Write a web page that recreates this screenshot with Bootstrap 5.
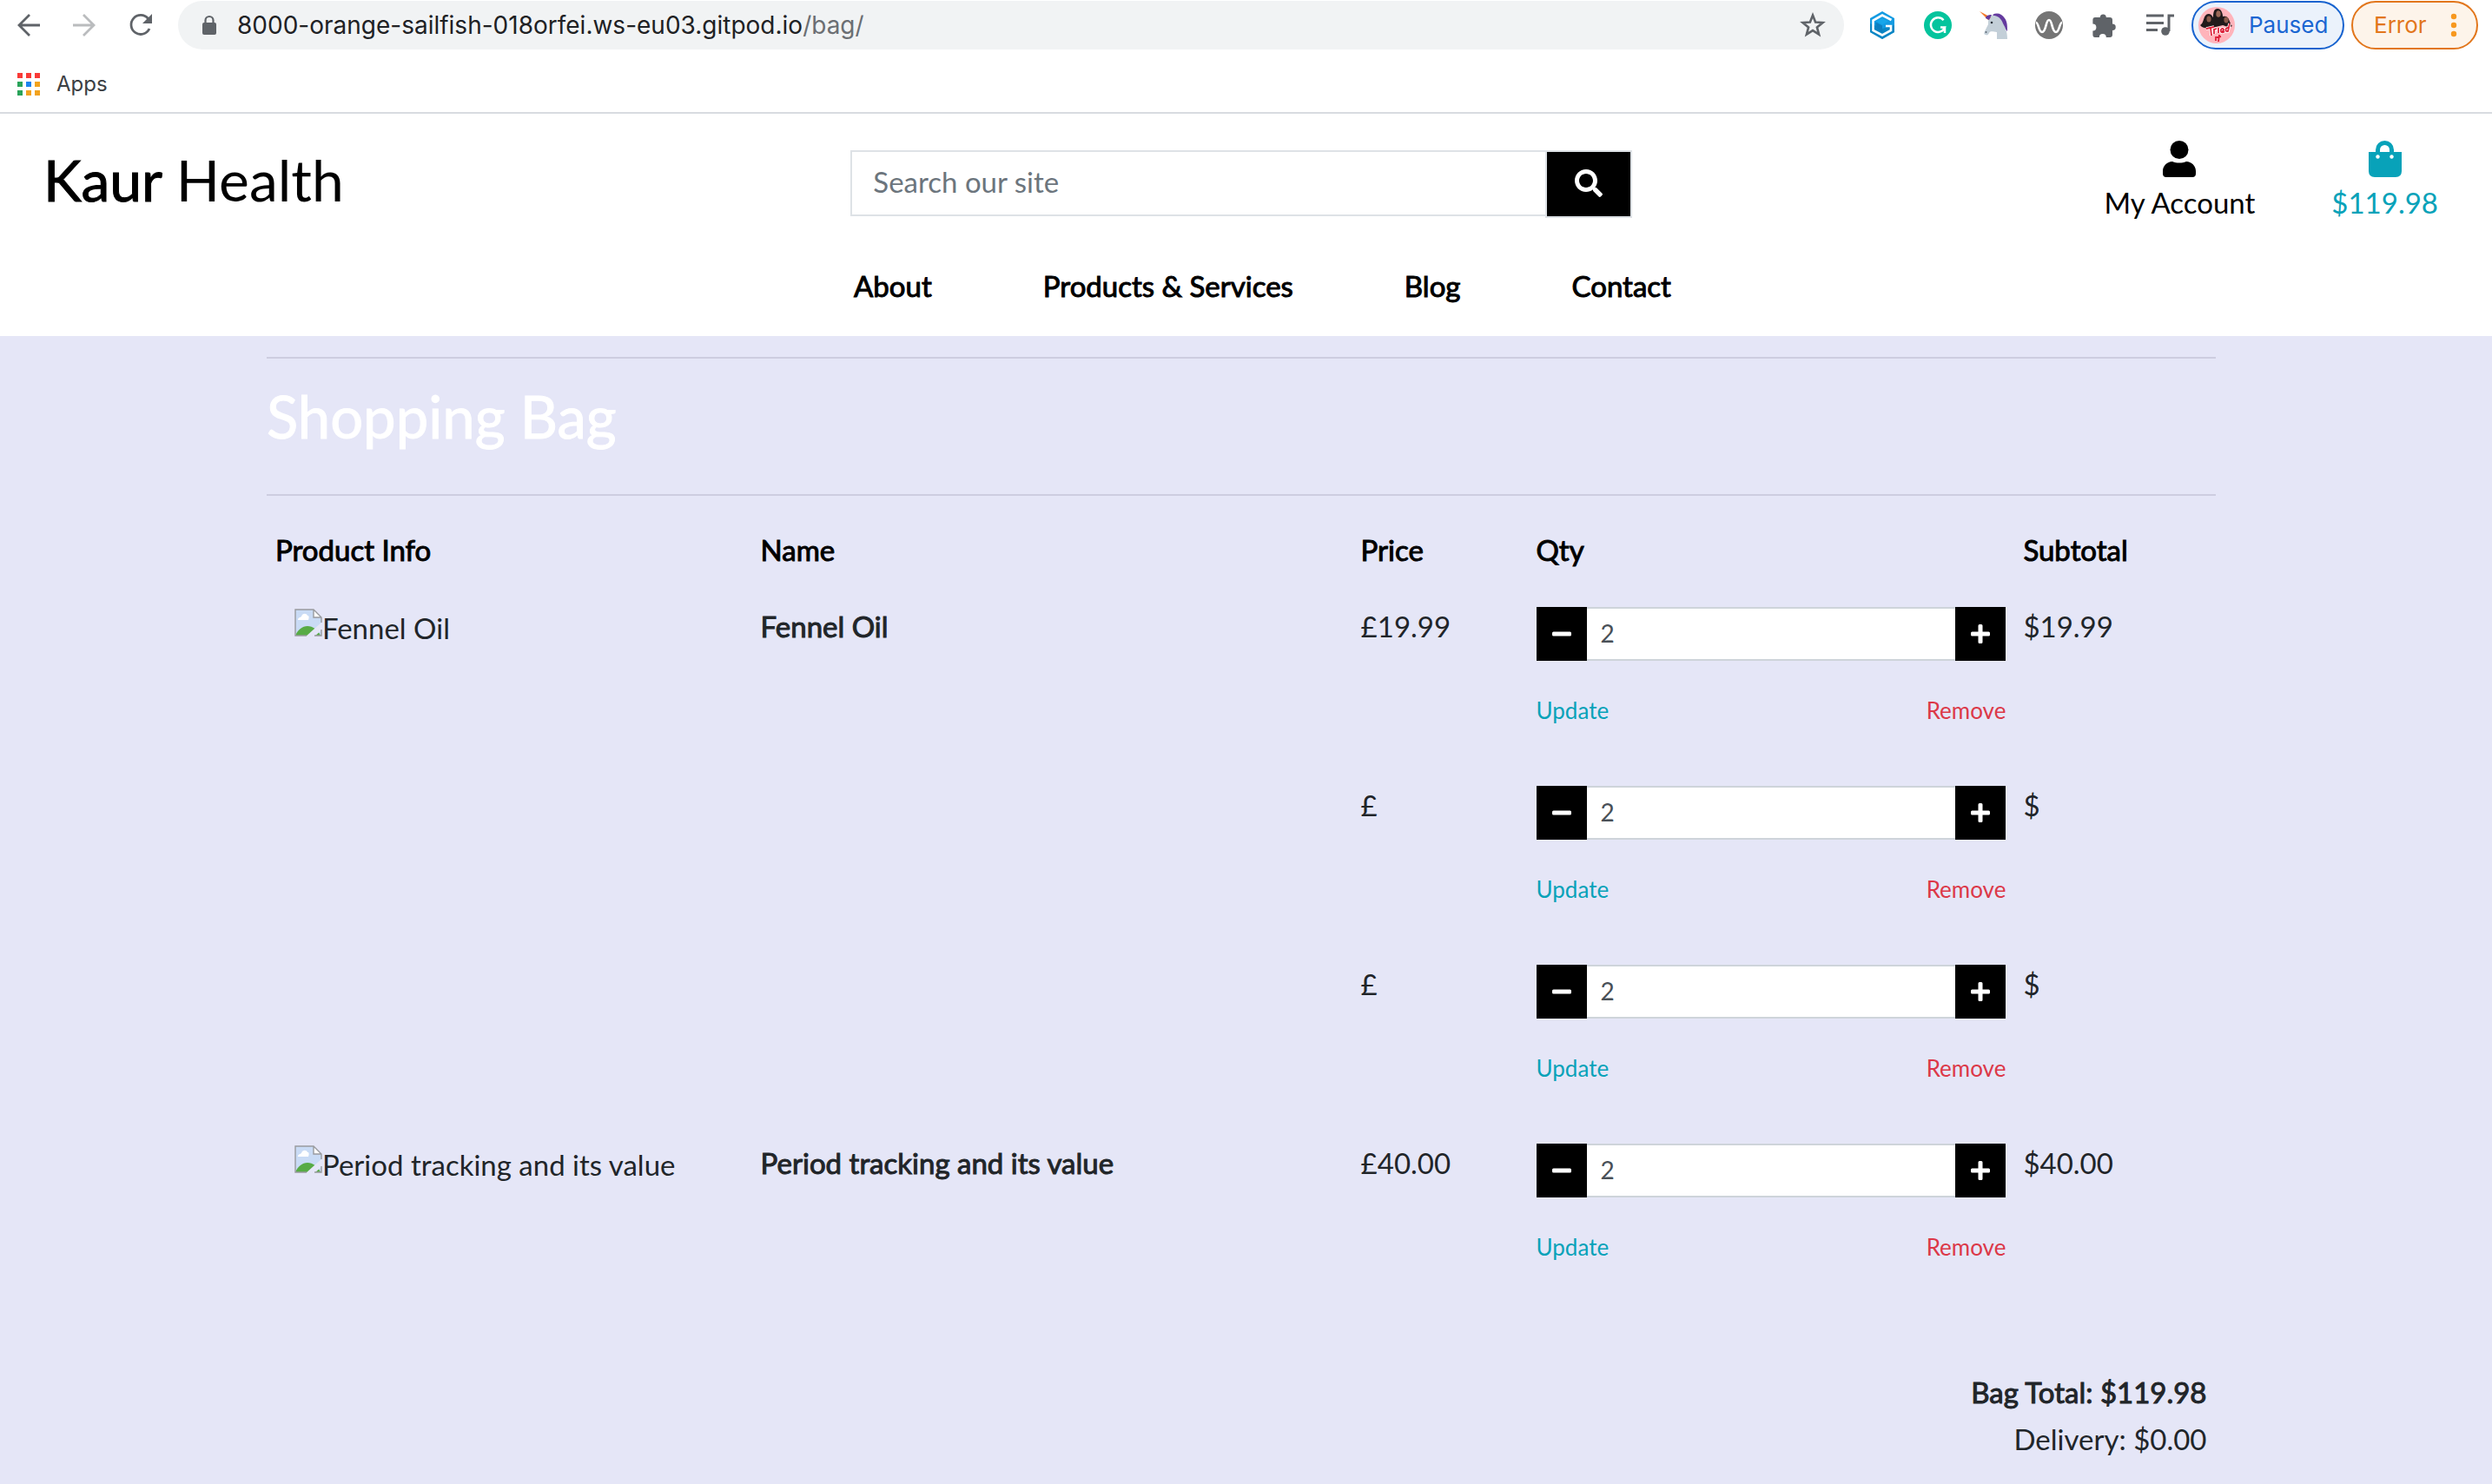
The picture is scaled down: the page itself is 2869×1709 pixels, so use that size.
<!DOCTYPE html>
<html lang="en">
<head>
<meta charset="utf-8">
<meta name="viewport" content="width=device-width, initial-scale=1">
<title>Shopping Bag - Kaur Health</title>
<link href="https://cdn.jsdelivr.net/npm/bootstrap@5.3.0/dist/css/bootstrap.min.css" rel="stylesheet">
<style>
  :root { --teal: #08a2b9; --grey: #5f6368; }
  body { background: #e5e6f7; font-family: Lato, "Noto Sans", sans-serif; font-size: 33px; line-height: 48px; color: #212529; }
  svg { display: block; flex: none; }
  a { text-decoration: none; color: inherit; }
  .heavy { -webkit-text-stroke: 1px currentColor; font-weight: 400; }

  /* browser bar */
  .browser { font-family: Inter, Roboto, sans-serif; border-bottom: 2px solid #d8dbe0; color: #202124; }
  .toolbar { padding: 1px 16px 0 20px; }
  .tool-btn { border: 0; background: none; padding: 0; }
  .history { gap: 36px; margin-right: 29px; }
  .omnibox { height: 56px; border-radius: 28px; background: #f1f3f4; padding: 0 20px 0 26px; font-size: 28px; }
  .url-field { margin-left: 22px; }
  .url-path { color: #6b6e72; }
  .extensions { gap: 32px; margin: 0 20px 0 28px; }
  .chip { height: 56px; border-radius: 28px; border: 2px solid; font-size: 26px; line-height: 52px; }
  .chip-paused { width: 176px; padding: 0 6px; gap: 16px; color: #1a66d2; background: #ebf2fb; border-color: #1763cf; }
  .chip-error { width: 146px; padding: 0 22px 0 24px; margin-left: 8px; color: #e2761b; background: #fdf4ea; border-color: #e2761b; }
  .bookmarks { height: 72px; padding: 8px 20px 0; font-size: 24px; color: #3c4043; }
  .bookmarks a { gap: 19px; }

  /* site header */
  .site-top { min-height: 126px; }
  .logo { display: inline-block; margin: 37px 0 0 50px; font-size: 66px; line-height: 78px; color: #000; }
  .search { padding: 42px 34px 0 23px; }
  .search .form-control { height: 76px; border: 2px solid #dee2e6; border-right: 0; border-radius: 0; padding: 0 24px 4px; font-size: 33px; }
  .search .form-control::placeholder { color: #6c757d; }
  .search .btn { width: 100px; height: 78px; padding: 0 0 2px; border: 2px solid #dee2e6; border-radius: 0; background: #000; display: flex; align-items: center; justify-content: center; }
  .account { gap: 88px; padding: 31px 62px 0 0; color: #000; }
  .account a { gap: 5px; }
  .account .bag-link { color: var(--teal); }
  .main-links { gap: 128px; padding: 48px 0 34px 38px; color: #000; }

  /* bag */
  .bag { width: 78.2%; margin-left: 10.7%; padding-top: 24px; }
  .bag hr { margin: 0; border-top: 2px solid #cdcde0; opacity: 1; }
  .bag h1 { margin: 26px 0 50px; font-size: 67px; line-height: 80px; color: #fff; }
  .bag-table { --bs-table-bg: transparent; table-layout: fixed; margin: 27px 0 0; color: inherit; }
  .bag-table th { padding: 11px 10px 16px; color: #000; }
  .bag-table tbody td { padding: 24px 10px 0; height: 206px; color: #212529; }
  .bag-table tfoot td { padding: 79px 10px 0; line-height: 54px; color: #212529; }
  .w-info { width: 24.9%; } .w-name { width: 30.8%; } .w-price { width: 9%; } .w-qty { width: 25%; }
  .missing { padding: 2px 0 0 22px; }
  .missing svg { margin-top: 2px; }
  .qty { padding-top: 2px; }
  .qty .btn { width: 58px; height: 62px; padding: 0; border: 0; border-radius: 0; background: #000; display: flex; align-items: center; justify-content: center; }
  .qty .form-control { height: 62px; border: solid #ced4da; border-width: 2px 0; border-radius: 0; padding: 0 16px 3px; font-size: 28px; color: #495057; }
  .actions { margin-top: 37px; font-size: 26px; line-height: 40px; }
  .update { color: var(--teal); } .remove { color: #dc3848; }
</style>
<script src="https://cdn.jsdelivr.net/npm/bootstrap@5.3.0/dist/js/bootstrap.bundle.min.js"></script>
</head>
<body>

<svg class="d-none" aria-hidden="true">
  <symbol id="i-broken" viewBox="0 0 32 32">
    <path d="M1 1h21l9 9v21H1z" fill="#c9dbf5"/>
    <path d="M4 13c0-3 3-3 4-4 1-4 6-4 7-1 2 0 2 2 1 5z" fill="#fff"/>
    <path d="M1 31c3-7 8-11 14-11s12 4 15 11z" fill="#57ab45"/>
    <path d="M13 32 32 15v9l-9 8z" fill="#e5e6f7"/>
    <path d="M22 1v9h9z" fill="#fff"/>
    <path d="M14 31H1V1h21l9 9v6M22 1v9h9M31 24v7h-8" fill="none" stroke="#999b9f" stroke-width="1.4"/>
  </symbol>
  <symbol id="i-minus" viewBox="0 0 22 22"><rect y="8.500" width="22" height="5" rx="1.500" fill="#fff"/></symbol>
  <symbol id="i-plus" viewBox="0 0 22 22"><path d="M1.500 8.500H8.500V1.500Q8.500 0 10 0h2q1.500 0 1.500 1.500v7h7q1.500 0 1.500 1.500v2q0 1.500-1.500 1.500h-7v7q0 1.500-1.500 1.500h-2q-1.500 0-1.500-1.500v-7h-7Q0 13.500 0 12v-2q0-1.500 1.500-1.500z" fill="#fff"/></symbol>
</svg>

<header class="browser bg-white">
  <div class="toolbar d-flex align-items-center">
    <div class="history d-flex">
      <button class="tool-btn" aria-label="Back"><svg width="28" height="28" viewBox="0 0 28 28" fill="none" stroke="#5f6368" stroke-width="2.8"><path d="M26 14H3M14 2 2 14l12 12"/></svg></button>
      <button class="tool-btn" aria-label="Forward"><svg width="28" height="28" viewBox="0 0 28 28" fill="none" stroke="#babcbe" stroke-width="2.8"><path d="M0 14h23M12 2l12 12-12 12"/></svg></button>
      <button class="tool-btn" aria-label="Reload"><svg width="28" height="28" viewBox="0 0 28 28"><path d="M22.500 6.500A11 11 0 1 0 24 18" fill="none" stroke="#5f6368" stroke-width="2.800"/><path d="M27 1v11H16z" fill="#5f6368"/></svg></button>
    </div>
    <div class="omnibox d-flex align-items-center flex-grow-1">
      <svg width="20" height="24" viewBox="0 0 20 24"><rect x="2" y="9" width="16" height="14" rx="2" fill="#5f6368"/><path d="M5.500 10V6.500a4.500 4.500 0 0 1 9 0V10" fill="none" stroke="#5f6368" stroke-width="2.200"/></svg>
      <div class="url-field flex-grow-1">8000-orange-sailfish-018orfei.ws-eu03.gitpod.io<span class="url-path">/bag/</span></div>
      <button class="tool-btn" aria-label="Bookmark this page"><svg width="32" height="32" viewBox="0 0 32 32"><path d="m16 4.500 3.100 8 8.400.500-6.600 5.400 2.200 8.300L16 22.100l-7.100 4.600 2.200-8.300L4.500 13l8.400-.500z" fill="none" stroke="#5f6368" stroke-width="2.600"/></svg></button>
    </div>
    <div class="extensions d-flex">
      <svg width="32" height="32" viewBox="0 0 32 32"><path d="M16 0 30 8v16l-14 8L2 24V8z" fill="#139be2"/><path d="M16 32 2 24V14l14 6 14-4v8z" fill="#0c86c4"/><path d="M26.500 10 16 4.500 5.500 10.500v11.500L16 27.500l10-5.500v-5h-6" fill="none" stroke="#fff" stroke-width="2.600"/><path d="m16 8 7 3.500-7 4-7-4z" fill="#16a6ea"/><path d="m8.500 12.500 7.500 4v8l-7.500-4z" fill="#0c7fc0"/></svg>
      <svg width="32" height="32" viewBox="0 0 32 32"><circle cx="16" cy="16" r="16" fill="#04c49d"/><path d="M22.500 10.200A8.300 8.300 0 1 0 24 18.500h-5M24 17.500V25" fill="none" stroke="#fff" stroke-width="2.500"/></svg>
      <svg width="32" height="32" viewBox="0 0 32 32"><path d="M15 4c5-3 11-1 14 4 3 4 3 9 3 15L22 12z" fill="#643a9e"/><path d="M13 5c7-1 12 3 14 9 3 5 5 10 5 18H20v-8c-4 0-7-2-9 1-1 2-2 3-4 2-2 0-2-2-1-4l4-8c0-4 0-7 3-10z" fill="#c3cfd8"/><path d="M0 0l13 7-3 3z" fill="#f4792b"/><path d="M7 8c0-3 3-4 7-4l-3 6z" fill="#643a9e"/><circle cx="14" cy="13" r="1.300" fill="#26323a"/><circle cx="7.500" cy="24" r="1" fill="#5b6770"/></svg>
      <svg width="32" height="32" viewBox="0 0 32 32"><circle cx="16" cy="16" r="16" fill="#757575"/><path d="M1 13c3 0 3 11 7 11 5 0 4-14 8-14s3 14 8 14c4 0 4-11 7-11" fill="none" stroke="#fff" stroke-width="2.600"/></svg>
      <svg width="32" height="32" viewBox="0 0 32 32"><path d="M25 14.500V10q0-3-3-3h-4.200a3.500 3.500 0 1 0-7 0H5q-2.600 0-2.600 3v4.600a4 4 0 0 1 0 8V27q0 3 2.600 3h4.800a4 4 0 0 1 8 0H22q3 0 3-3v-5a3.700 3.700 0 1 0 0-7.500z" fill="#5f6368"/></svg>
      <svg width="32" height="32" viewBox="0 0 32 32" fill="none" stroke="#5f6368" stroke-width="3"><path d="M0 5h20M0 13.500h20M0 21.500h13M32 5h-6v18"/><circle cx="22" cy="23" r="4.800" fill="#5f6368" stroke="none"/></svg>
    </div>
    <button class="chip chip-paused d-flex align-items-center">
      <svg width="42" height="42" viewBox="0 0 42 42"><circle cx="21" cy="21" r="21" fill="#ffb4bb"/><path d="M2 21c5-2 3-13 10-13 3 0 4 3 5 4 0-6 1-10 5-10s6 5 6 9c8-2 7 7 11 11-4 2-8 0-11-1l-12 3c-5 1-11 1-14-3z" fill="#211a1b"/><ellipse cx="12" cy="14" rx="2.600" ry="3.600" fill="#8a5a4b"/><ellipse cx="23" cy="8" rx="2.700" ry="3.800" fill="#9b6857"/><ellipse cx="32" cy="15" rx="2.600" ry="3.400" fill="#8a5a4b"/><path d="M9 25l9-2M14 24l1 9M18 31v-5l3-1M23 24v6M27 28c4-1 1-5-1-2-1 4 2 4 4 2M36 19l-2 9c-4 1-3-5 1-4" fill="none" stroke="#fff" stroke-width="3.500"/><path d="M9 25l9-2M14 24l1 9M18 31v-5l3-1M23 24v6M27 28c4-1 1-5-1-2-1 4 2 4 4 2M36 19l-2 9c-4 1-3-5 1-4M20 34v5M24 32l-1 8M21 35l5-1" fill="none" stroke="#dc2038" stroke-width="1.800"/></svg>
      <span>Paused</span>
    </button>
    <button class="chip chip-error d-flex align-items-center justify-content-between">
      <span>Error</span>
      <svg width="8" height="28" viewBox="0 0 8 28" fill="#f7981f"><circle cx="4" cy="4" r="3.200"/><circle cx="4" cy="14" r="3.200"/><circle cx="4" cy="24" r="3.200"/></svg>
    </button>
  </div>
  <div class="bookmarks d-flex align-items-center">
    <a href="#" class="d-flex align-items-center">
      <svg width="26" height="26" viewBox="0 0 26 26"><path d="M0 0h6v6H0zM10 0h6v6h-6zM20 0h6v6h-6z" fill="#f93a37"/><path d="M0 10h6v6H0zM0 20h6v6H0z" fill="#2aa35a"/><path d="M10 10h6v6h-6z" fill="#1b83f0"/><path d="M20 10h6v6h-6zM10 20h6v6h-6zM20 20h6v6h-6z" fill="#f2a31f"/></svg>
      <span>Apps</span>
    </a>
  </div>
</header>

<header class="bg-white">
  <div class="row g-0 site-top">
    <div class="col-4"><a href="#" class="logo"><span class="heavy">Kaur</span> Health</a></div>
    <div class="col-4">
      <form class="search d-flex">
        <input class="form-control" type="text" placeholder="Search our site" aria-label="Search our site">
        <button class="btn flex-shrink-0" type="button" aria-label="Search"><svg width="32" height="32" viewBox="0 0 512 512"><path fill="#fff" d="M505 442.700 405.300 343c-4.500-4.500-10.600-7-17-7H372c27.600-35.300 44-79.700 44-128C416 93.100 322.900 0 208 0S0 93.100 0 208s93.100 208 208 208c48.300 0 92.700-16.400 128-44v16.300c0 6.400 2.500 12.500 7 17l99.700 99.700c9.400 9.400 24.600 9.400 33.900 0l28.300-28.300c9.400-9.400 9.400-24.600.1-34zM208 336c-70.700 0-128-57.200-128-128 0-70.700 57.200-128 128-128 70.700 0 128 57.200 128 128 0 70.700-57.200 128-128 128z"/></svg></button>
      </form>
    </div>
    <div class="col-4">
      <div class="account d-flex justify-content-end">
        <a href="#" class="d-flex flex-column align-items-center">
          <svg width="38" height="42" viewBox="0 0 38 42"><circle cx="19" cy="10.500" r="10.500"/><path d="M11 24c5 2 11 2 16 0 6 0 11 5 11 11v3q0 4-4 4H4q-4 0-4-4v-3c0-6 5-11 11-11z"/></svg>
          <span>My Account</span>
        </a>
        <a href="#" class="bag-link d-flex flex-column align-items-center">
          <svg width="38" height="42" viewBox="0 0 38 42"><path d="M0 13h38v22q0 7-7 7H7q-7 0-7-7z" fill="currentColor"/><path d="M10.500 18v-7.500a8 8 0 0 1 16 0V18" fill="none" stroke="currentColor" stroke-width="5"/><circle cx="10.500" cy="18.500" r="2.200" fill="#fff"/><circle cx="26.500" cy="18.500" r="2.200" fill="#fff"/></svg>
          <span>$119.98</span>
        </a>
      </div>
    </div>
  </div>
  <nav class="main-links d-flex justify-content-center heavy">
    <a href="#">About</a><a href="#">Products &amp; Services</a><a href="#">Blog</a><a href="#">Contact</a>
  </nav>
</header>

<main class="bag">
  <hr>
  <h1 class="heavy">Shopping Bag</h1>
  <hr>
  <table class="table table-borderless bag-table">
    <colgroup><col class="w-info"><col class="w-name"><col class="w-price"><col class="w-qty"><col></colgroup>
    <thead>
      <tr><th class="heavy">Product Info</th><th class="heavy">Name</th><th class="heavy">Price</th><th class="heavy">Qty</th><th class="heavy">Subtotal</th></tr>
    </thead>
    <tbody id="lines"></tbody>
    <tfoot>
      <tr><td colspan="5" class="text-end"><div class="heavy">Bag Total: $119.98</div><div>Delivery: $0.00</div></td></tr>
    </tfoot>
  </table>
</main>

<script>
  const lines = [
    { name: 'Fennel Oil', price: '19.99' },
    { name: '', price: '' },
    { name: '', price: '' },
    { name: 'Period tracking and its value', price: '40.00' }
  ];
  document.getElementById('lines').innerHTML = lines.map((l, i) => `
    <tr>
      <td>${l.name ? `<div class="missing d-flex"><svg width="32" height="32"><use href="#i-broken"/></svg><span>${l.name}</span></div>` : ''}</td>
      <td class="heavy">${l.name}</td>
      <td>£${l.price}</td>
      <td>
        <form class="qty">
          <div class="d-flex">
            <button type="button" class="btn flex-shrink-0" aria-label="Decrease quantity"><svg width="22" height="22"><use href="#i-minus"/></svg></button>
            <input id="qty${i}" class="form-control" type="number" value="2" aria-label="Quantity">
            <button type="button" class="btn flex-shrink-0" aria-label="Increase quantity"><svg width="22" height="22"><use href="#i-plus"/></svg></button>
          </div>
          <div class="actions d-flex justify-content-between"><a href="#" class="update">Update</a><a href="#" class="remove">Remove</a></div>
        </form>
      </td>
      <td>$${l.price}</td>
    </tr>`).join('');
</script>
</body>
</html>
